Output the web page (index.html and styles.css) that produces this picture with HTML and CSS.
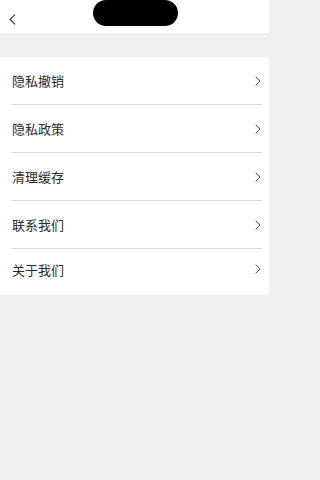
FILE: index.html
```html
<!DOCTYPE html>
<html lang="zh">
<head>
<meta charset="utf-8">
<link rel="stylesheet" href="styles.css">
</head>
<body>
<div class="page">
  <header class="topbar">
    <svg class="back" width="7" height="11" viewBox="0 0 7 11"><path d="M6 0.6 L1 5.5 L6 10.4" fill="none" stroke="#333" stroke-width="1.1"/></svg>
  </header>
  <div class="notch"></div>
  <div class="gap"></div>
  <ul class="list">
    <li class="row"><span>隐私撤销</span><svg class="chev" width="6" height="10" viewBox="0 0 6 10"><path d="M0.7 0.7 L5 5 L0.7 9.3" fill="none" stroke="#555" stroke-width="1"/></svg></li>
    <li class="row"><span>隐私政策</span><svg class="chev" width="6" height="10" viewBox="0 0 6 10"><path d="M0.7 0.7 L5 5 L0.7 9.3" fill="none" stroke="#555" stroke-width="1"/></svg></li>
    <li class="row"><span>清理缓存</span><svg class="chev" width="6" height="10" viewBox="0 0 6 10"><path d="M0.7 0.7 L5 5 L0.7 9.3" fill="none" stroke="#555" stroke-width="1"/></svg></li>
    <li class="row"><span>联系我们</span><svg class="chev" width="6" height="10" viewBox="0 0 6 10"><path d="M0.7 0.7 L5 5 L0.7 9.3" fill="none" stroke="#555" stroke-width="1"/></svg></li>
    <li class="row last"><span>关于我们</span><svg class="chev" width="6" height="10" viewBox="0 0 6 10"><path d="M0.7 0.7 L5 5 L0.7 9.3" fill="none" stroke="#555" stroke-width="1"/></svg></li>
  </ul>
</div>
</body>
</html>
```
FILE: styles.css
```css
html, body {
  margin: 0;
  padding: 0;
  background: #f0f0f0;
  font-family: "Noto Sans CJK SC", "Noto Sans", sans-serif;
}
.page {
  position: relative;
  width: 269px;
  min-height: 480px;
  background: #f0f0f0;
}
.topbar {
  height: 33px;
  background: #fff;
  display: flex;
  align-items: center;
  padding-left: 9px;
  box-sizing: border-box;
}
.back {
  display: block;
  margin-top: 5px;
}
.notch {
  position: absolute;
  left: 93px;
  top: 0;
  width: 85px;
  height: 26px;
  border-radius: 13px;
  background: #000;
}
.gap {
  height: 24px;
}
.list {
  list-style: none;
  margin: 0;
  padding: 0 7px 0 12px;
  background: #fff;
}
.row {
  height: 47px;
  display: flex;
  align-items: center;
  justify-content: space-between;
  border-bottom: 1px solid #dcdcdc;
  font-size: 13px;
  color: #2b2b2b;
}
.row.last {
  border-bottom: none;
  height: 40px;
  padding-bottom: 6px;
}
.chev {
  display: block;
  margin-right: 1px;
}
```
